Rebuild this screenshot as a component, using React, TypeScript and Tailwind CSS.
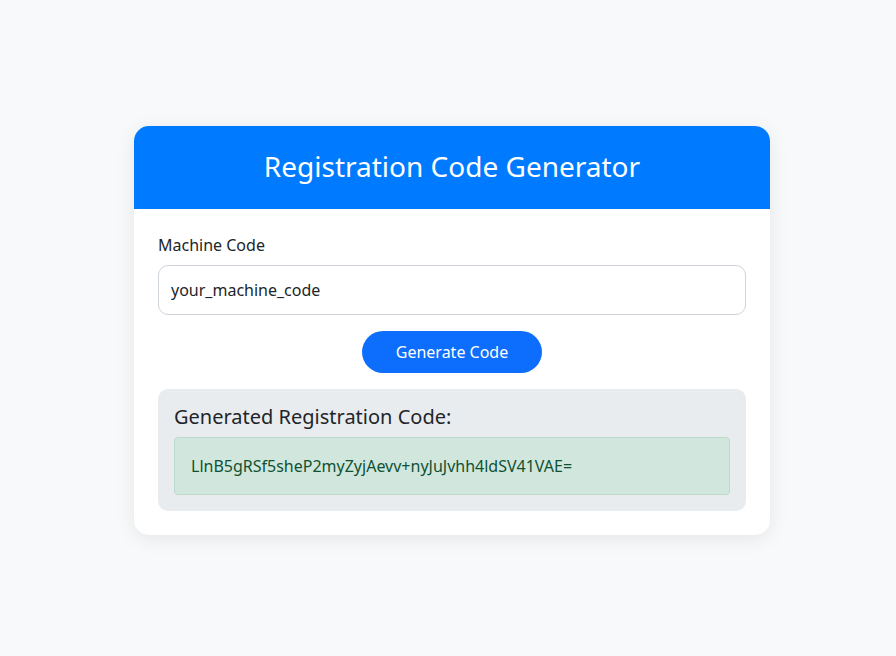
export default function App() {
  return (
    <div
      className="min-h-screen w-full bg-[#f8f9fa] flex items-start justify-center pt-[126px] pl-2"
      style={{ fontFamily: '"Noto Sans", "Open Sans", sans-serif' }}
    >
      <div className="w-[636px] bg-white rounded-[15px] shadow-[0_4px_20px_rgba(0,0,0,0.08)] overflow-hidden">
        <div className="h-[83px] bg-[#007bff] flex items-center justify-center pb-1">
          <h2 className="text-white text-[28px] leading-none">Registration Code Generator</h2>
        </div>
        <div className="p-6">
          <label className="block text-[16px] text-[#212529] leading-6 mb-2">Machine Code</label>
          <input
            className="w-full h-[50px] px-3 border border-[#ced4da] rounded-[10px] text-[16px] text-[#212529] outline-none"
            defaultValue="your_machine_code"
          />
          <div className="flex justify-center mt-4">
            <button className="w-[180px] h-[42px] rounded-full bg-[#0d6efd] text-white text-[16px]">
              Generate Code
            </button>
          </div>
          <div className="mt-4 bg-[#e9ecef] rounded-[10px] p-4">
            <h4 className="text-[20px] leading-6 text-[#212529] mb-2">Generated Registration Code:</h4>
            <div className="bg-[#d1e7dd] border border-[#badbcc] rounded-[4px] h-[58px] px-4 flex items-center text-[16px] text-[#0f5132]">
              LlnB5gRSf5sheP2myZyjAevv+nyJuJvhh4ldSV41VAE=
            </div>
          </div>
        </div>
      </div>
    </div>
  )
}
